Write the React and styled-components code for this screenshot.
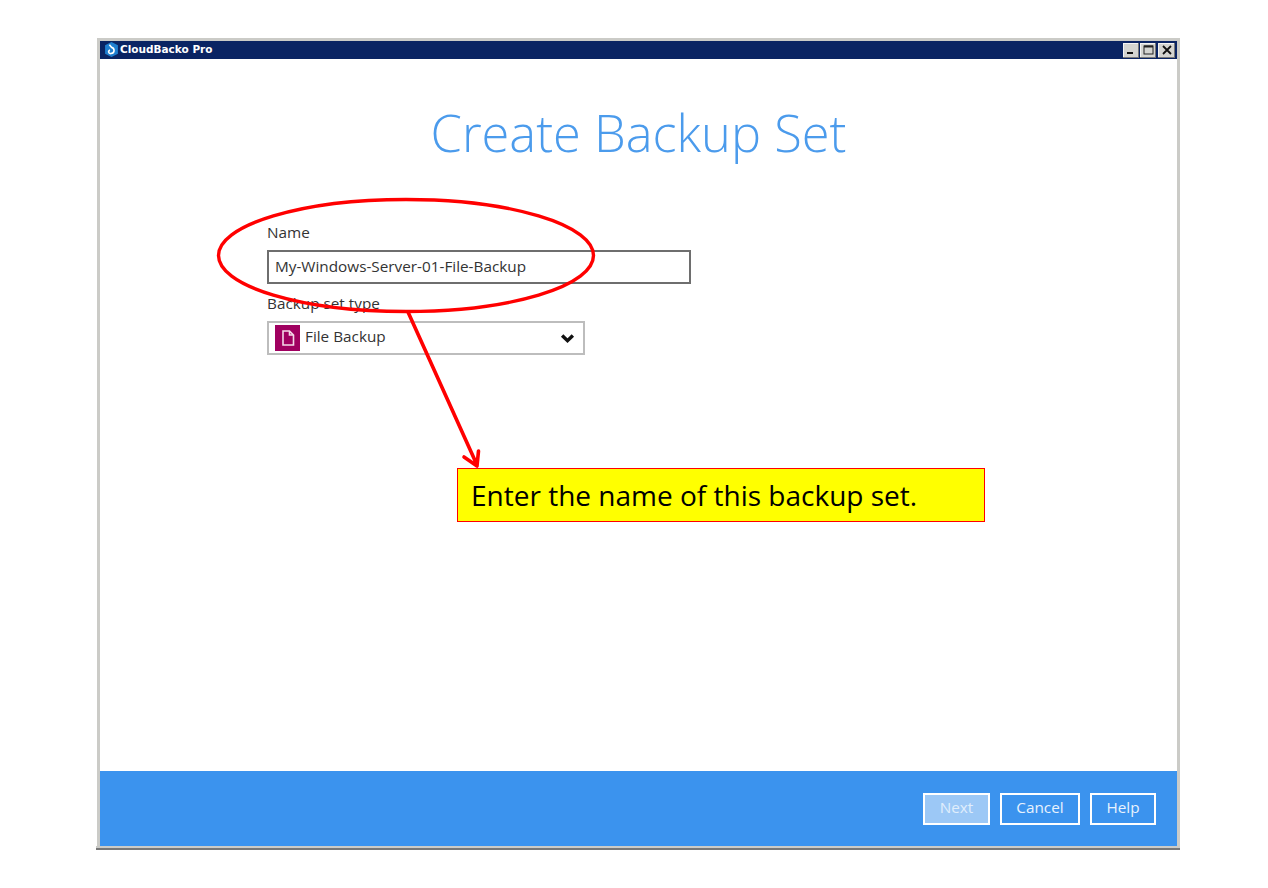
import styled, { createGlobalStyle } from 'styled-components';

const GlobalStyle = createGlobalStyle`
  html, body {
    margin: 0;
    padding: 0;
    background: #fff;
  }
  body {
    font-family: 'Open Sans', 'Noto Sans', sans-serif;
  }
`;

const App = () => {
  return (
    <Page>
      <GlobalStyle />
      <Window>
        <TitleBar>
          <AppTitle>
            <AppLogo viewBox="0 0 14 14">
              <path d="M7 0 L13 3 L13 11 L7 14 L1 11 L1 3 Z" fill="#1f7fd0" />
              <path d="M5 2.5 L7 5 C10 5.5 10.5 10.5 6.5 10.8 C4 11 3.6 8 5.6 7.6" fill="none" stroke="#fff" strokeWidth="1.5" />
            </AppLogo>
            <AppName>CloudBacko Pro</AppName>
          </AppTitle>
          <WinButtons>
            <WinButton>
              <svg width="10" height="10" viewBox="0 0 10 10"><rect x="1" y="7" width="6" height="2" fill="#111" /></svg>
            </WinButton>
            <WinButton>
              <svg width="11" height="10" viewBox="0 0 11 10"><rect x="1" y="1" width="9" height="8" fill="none" stroke="#222" strokeWidth="1" /><rect x="1" y="0.5" width="9" height="2" fill="#222" /></svg>
            </WinButton>
            <WinButton $wide>
              <svg width="10" height="10" viewBox="0 0 10 10"><path d="M1 1 L9 9 M9 1 L1 9" stroke="#111" strokeWidth="1.8" /></svg>
            </WinButton>
          </WinButtons>
        </TitleBar>
        <Content>
          <Heading>Create Backup Set</Heading>
          <Form>
            <Label>Name</Label>
            <NameInput>My-Windows-Server-01-File-Backup</NameInput>
            <TypeLabel>Backup set type</TypeLabel>
            <Select>
              <TypeIcon>
                <svg width="14" height="16" viewBox="0 0 14 16">
                  <path d="M2 1 H8.5 L12.5 5 V15 H2 Z M8.5 1 V5 H12.5" fill="none" stroke="#f3d9e8" strokeWidth="1.6" />
                </svg>
              </TypeIcon>
              <SelectText>File Backup</SelectText>
              <Chevron viewBox="0 0 14 10">
                <path d="M2 2.2 L7 7 L12 2.2" fill="none" stroke="#111" strokeWidth="3.2" />
              </Chevron>
            </Select>
          </Form>
        </Content>
        <Footer>
          <FooterButton $disabled $w={67}>Next</FooterButton>
          <FooterButton $w={80}>Cancel</FooterButton>
          <FooterButton>Help</FooterButton>
        </Footer>
      </Window>

      <Annotation viewBox="0 0 1268 888">
        <ellipse cx="406" cy="255.5" rx="187.5" ry="56" fill="none" stroke="#f00" strokeWidth="3.4" />
        <path d="M408 312 L477 465 M464 457 L477 466 L478.5 451" fill="none" stroke="#f00" strokeWidth="3.6" strokeLinecap="round" strokeLinejoin="round" />
      </Annotation>
      <Callout>Enter the name of this backup set.</Callout>
    </Page>
  );
};

const Page = styled.div`
  position: relative;
  width: 1268px;
  height: 888px;
  padding: 38px 0 0 97px;
  box-sizing: border-box;
  overflow: hidden;
`;
const Window = styled.div`
  width: 1083px;
  height: 812px;
  box-sizing: border-box;
  display: flex;
  flex-direction: column;
  border: solid 3px #cbcbc7;
  border-bottom: none;
  background: #fff;
  &::after {
    content: '';
    height: 4px;
    background: linear-gradient(#cbcbc7 0 50%, #777 50% 100%);
    margin: 0 -3px 0 -4px;
  }
`;
const TitleBar = styled.div`
  height: 18px;
  flex-shrink: 0;
  display: flex;
  align-items: center;
  justify-content: space-between;
  background: #0a2463;
  padding: 0 2px 0 4px;
`;
const AppTitle = styled.div`
  display: flex;
  align-items: center;
  gap: 1px;
  margin-top: -1px;
`;
const AppLogo = styled.svg`
  width: 15px;
  height: 15px;
`;
const AppName = styled.div`
  color: #fff;
  font-family: 'DejaVu Sans', sans-serif;
  font-size: 10.5px;
  font-weight: 700;
  margin-top: -1px;
`;
const WinButtons = styled.div`
  display: flex;
  gap: 1px;
`;
const WinButton = styled.div`
  width: ${({ $wide }) => ($wide ? '17px' : '16px')};
  height: 15px;
  margin-left: ${({ $wide }) => ($wide ? '1px' : '0')};
  display: flex;
  align-items: center;
  justify-content: center;
  background: #d4d4d0;
  box-shadow: inset -1px -1px 0 #777, inset 1px 1px 0 #f4f4f4;
`;
const Content = styled.div`
  flex: 1;
  display: flex;
  flex-direction: column;
`;
const Heading = styled.h1`
  margin: 40px 0 0;
  text-align: center;
  font-size: 50.6px;
  line-height: 68px;
  font-weight: 300;
  color: #4b9bec;
`;
const Form = styled.div`
  display: flex;
  flex-direction: column;
  align-items: flex-start;
  margin: 55px 0 0 167px;
`;
const Label = styled.div`
  font-size: 15.3px;
  line-height: 20px;
  color: #333;
`;
const TypeLabel = styled(Label)`
  margin-top: 9px;
  margin-bottom: 8px;
`;
const NameInput = styled.div`
  width: 424px;
  height: 34px;
  margin-top: 8px;
  box-sizing: border-box;
  display: flex;
  align-items: center;
  padding: 0 6px 2px;
  border: solid 2px #6e6e6e;
  font-size: 15.3px;
  color: #333;
`;
const Select = styled.div`
  width: 318px;
  height: 34px;
  box-sizing: border-box;
  display: flex;
  align-items: center;
  padding: 0 8px 0 6px;
  border: solid 2px #bdbdbd;
`;
const TypeIcon = styled.div`
  width: 25px;
  height: 26px;
  flex-shrink: 0;
  display: flex;
  align-items: center;
  justify-content: center;
  background: #a00060;
`;
const SelectText = styled.div`
  flex: 1;
  margin: -5px 0 0 5px;
  font-size: 15.3px;
  color: #333;
`;
const Chevron = styled.svg`
  width: 15px;
  height: 11px;
`;
const Footer = styled.div`
  height: 75px;
  flex-shrink: 0;
  box-sizing: border-box;
  display: flex;
  align-items: center;
  justify-content: flex-end;
  gap: 10px;
  padding: 0 21px 0 0;
  background: #3b93ee;
`;
const FooterButton = styled.div`
  width: ${({ $w }) => $w || 66}px;
  height: 32px;
  box-sizing: border-box;
  display: flex;
  align-items: center;
  justify-content: center;
  padding-bottom: 4px;
  border: solid 2px #fff;
  font-size: 15.3px;
  color: ${({ $disabled }) => ($disabled ? '#e0eefc' : '#e8f2fd')};
  background: ${({ $disabled }) => ($disabled ? '#9cc8f6' : 'transparent')};
`;
const Annotation = styled.svg`
  position: absolute;
  top: 0;
  left: 0;
  width: 1268px;
  height: 888px;
  pointer-events: none;
`;
const Callout = styled.div`
  position: absolute;
  left: 457px;
  top: 468px;
  width: 528px;
  height: 54px;
  box-sizing: border-box;
  display: flex;
  align-items: center;
  padding-left: 13px;
  border: solid 1px #f00;
  background: #ff0;
  font-family: 'Open Sans', sans-serif;
  font-size: 28px;
  color: #000;
`;

export default App;
